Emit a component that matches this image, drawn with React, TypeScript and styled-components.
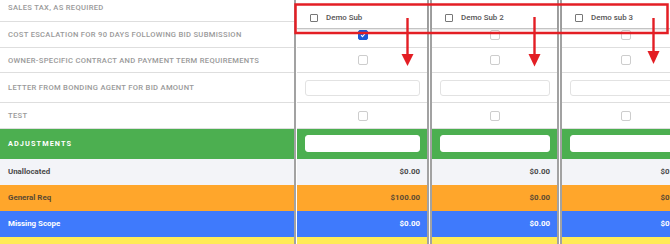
import React from "react";
import styled, { createGlobalStyle, css } from "styled-components";

type Tone = "white" | "green" | "gray" | "orange" | "blue" | "yellow";
type Kind = "check" | "input" | "section" | "amount";

interface Row {
  label: string;
  kind: Kind;
  height: number;
  tone: Tone;
  values?: string[];
}

const rows: Row[] = [
  { label: "SALES TAX, AS REQUIRED", kind: "check", height: 28, tone: "white" },
  { label: "COST ESCALATION FOR 90 DAYS FOLLOWING BID SUBMISSION", kind: "check", height: 26, tone: "white" },
  { label: "OWNER-SPECIFIC CONTRACT AND PAYMENT TERM REQUIREMENTS", kind: "check", height: 25, tone: "white" },
  { label: "LETTER FROM BONDING AGENT FOR BID AMOUNT", kind: "input", height: 30, tone: "white" },
  { label: "TEST", kind: "check", height: 26, tone: "white" },
  { label: "ADJUSTMENTS", kind: "section", height: 30, tone: "green" },
  { label: "Unallocated", kind: "amount", height: 26, tone: "gray", values: ["$0.00", "$0.00", "$0.00"] },
  { label: "General Req", kind: "amount", height: 26, tone: "orange", values: ["$100.00", "$0.00", "$0.00"] },
  { label: "Missing Scope", kind: "amount", height: 26, tone: "blue", values: ["$0.00", "$0.00", "$0.00"] },
  { label: "", kind: "amount", height: 26, tone: "yellow", values: ["", "", ""] },
];

const subs = [
  { name: "Demo Sub", width: 130, checked: [false, true, false, false, false] },
  { name: "Demo Sub 2", width: 125, checked: [false, false, false, false, false] },
  { name: "Demo sub 3", width: 126, checked: [false, false, false, false, false] },
];

const toneBg: Record<Tone, string> = {
  white: "#ffffff",
  green: "#4caf50",
  gray: "#f3f4f8",
  orange: "#ffa62b",
  blue: "#3f7afc",
  yellow: "#ffeb57",
};

const toneText: Record<Tone, string> = {
  white: "#9a9a9a",
  green: "#ffffff",
  gray: "#4a4a4a",
  orange: "#5b4a33",
  blue: "#ffffff",
  yellow: "#4a4a4a",
};

const GlobalStyle = createGlobalStyle`
  html, body {
    margin: 0;
    padding: 0;
    background: #ffffff;
    overflow: hidden;
  }
  body {
    font-family: Roboto, "Noto Sans", Arial, sans-serif;
  }
`;

const Page = styled.div`
  position: relative;
  width: 670px;
  height: 244px;
  overflow: hidden;
`;

const Table = styled.div`
  display: flex;
  align-items: flex-start;
  margin-top: -6px;
`;

const LabelColumn = styled.div`
  width: 294px;
  flex-shrink: 0;
  border-right: 2px solid #a2a2a2;
  margin-right: 1px;
`;

const LabelCell = styled.div<{ $tone: Tone; $height: number; $kind: Kind }>`
  height: ${({ $height }) => $height}px;
  box-sizing: border-box;
  display: flex;
  align-items: center;
  padding-left: 8px;
  background: ${({ $tone }) => toneBg[$tone]};
  color: ${({ $tone }) => toneText[$tone]};
  border-bottom: 1px solid ${({ $tone }) => ($tone === "white" ? "#dedede" : "transparent")};
  white-space: nowrap;
  ${({ $kind }) =>
    $kind === "amount"
      ? css`
          font-size: 7.9px;
          font-weight: 700;
        `
      : $kind === "section"
      ? css`
          font-size: 7.3px;
          font-weight: 700;
          letter-spacing: 1.1px;
        `
      : css`
          font-size: 7.6px;
          font-weight: 500;
          letter-spacing: 0.3px;
        `}
`;

const SubColumn = styled.div<{ $first: boolean; $width: number }>`
  position: relative;
  width: ${({ $width }) => $width}px;
  flex-shrink: 0;
  border-left: ${({ $first }) => ($first ? "none" : "2px solid #a2a2a2")};
  border-right: 2px solid #a2a2a2;
  margin-right: 1px;
`;

const SubHeader = styled.div`
  position: absolute;
  top: 9px;
  left: 0;
  right: 0;
  height: 26px;
  box-sizing: border-box;
  padding: 4px 0 0 13px;
  display: flex;
  align-items: center;
  gap: 8px;
  background: #ffffff;
  border-bottom: 1px solid #c4c4c4;
  box-shadow: 0 1px 2px rgba(0, 0, 0, 0.12);
  font-size: 7.9px;
  font-weight: 500;
  color: #555555;
  z-index: 1;
`;

const HeaderBox = styled.span`
  width: 6px;
  height: 6px;
  border: 1px solid #777777;
  border-radius: 1px;
  background: #ffffff;
`;

const Cell = styled.div<{ $tone: Tone; $height: number; $align: "center" | "end" }>`
  height: ${({ $height }) => $height}px;
  box-sizing: border-box;
  display: flex;
  align-items: center;
  justify-content: ${({ $align }) => ($align === "end" ? "flex-end" : "center")};
  padding: 0 7px 0 8px;
  background: ${({ $tone }) => toneBg[$tone]};
  color: ${({ $tone }) => toneText[$tone]};
  border-bottom: 1px solid ${({ $tone }) => ($tone === "white" ? "#dedede" : "transparent")};
  font-size: 7.9px;
  font-weight: 700;
`;

const Box = styled.span<{ $checked: boolean }>`
  width: 8px;
  height: 8px;
  border-radius: 2px;
  display: flex;
  align-items: center;
  justify-content: center;
  border: 1px solid ${({ $checked }) => ($checked ? "#1b5ad8" : "#cdcdcd")};
  background: ${({ $checked }) => ($checked ? "#1b5ad8" : "#ffffff")};
`;

const TextBox = styled.div<{ $onColor: boolean }>`
  width: 100%;
  height: ${({ $onColor }) => ($onColor ? 17 : 16)}px;
  box-sizing: border-box;
  background: #ffffff;
  border: 1px solid ${({ $onColor }) => ($onColor ? "#ffffff" : "#e2e2e2")};
  border-radius: 3px;
`;

const Overlay = styled.svg`
  position: absolute;
  inset: 0;
  pointer-events: none;
  z-index: 5;
`;

const arrows = [
  { x: 407.5, top: 18, headTop: 54, headBottom: 66 },
  { x: 534.5, top: 17, headTop: 54, headBottom: 66.5 },
  { x: 653.5, top: 18, headTop: 51, headBottom: 64 },
];

const CheckBox: React.FC<{ checked: boolean }> = ({ checked }) => (
  <Box $checked={checked}>
    {checked && (
      <svg width="6" height="6" viewBox="0 0 6 6">
        <path d="M1 3.2 L2.5 4.6 L5 1.6" fill="none" stroke="#fff" strokeWidth="1.1" />
      </svg>
    )}
  </Box>
);

const App: React.FC = () => {
  return (
    <Page>
      <GlobalStyle />
      <Table>
        <LabelColumn>
          {rows.map((row, i) => (
            <LabelCell key={i} $tone={row.tone} $height={row.height} $kind={row.kind}>
              {row.label}
            </LabelCell>
          ))}
        </LabelColumn>
        {subs.map((sub, s) => (
          <SubColumn key={sub.name} $first={s === 0} $width={sub.width}>
            <SubHeader>
              <HeaderBox />
              {sub.name}
            </SubHeader>
            {rows.map((row, i) => (
              <Cell
                key={i}
                $tone={row.tone}
                $height={row.height}
                $align={row.kind === "amount" ? "end" : "center"}
              >
                {row.kind === "check" && <CheckBox checked={sub.checked[i]} />}
                {row.kind === "input" && <TextBox $onColor={false} />}
                {row.kind === "section" && <TextBox $onColor />}
                {row.kind === "amount" && row.values?.[s]}
              </Cell>
            ))}
          </SubColumn>
        ))}
      </Table>
      <Overlay width="670" height="244" viewBox="0 0 670 244">
        <rect x="295.5" y="4.5" width="372" height="28.5" fill="none" stroke="#e31e24" strokeWidth="2.5" />
        {arrows.map((a) => (
          <g key={a.x}>
            <line x1={a.x} y1={a.top} x2={a.x} y2={a.headTop + 1} stroke="#e31e24" strokeWidth="2.4" />
            <polygon
              points={`${a.x - 6},${a.headTop} ${a.x + 6},${a.headTop} ${a.x},${a.headBottom}`}
              fill="#e31e24"
            />
          </g>
        ))}
      </Overlay>
    </Page>
  );
};

export default App;
